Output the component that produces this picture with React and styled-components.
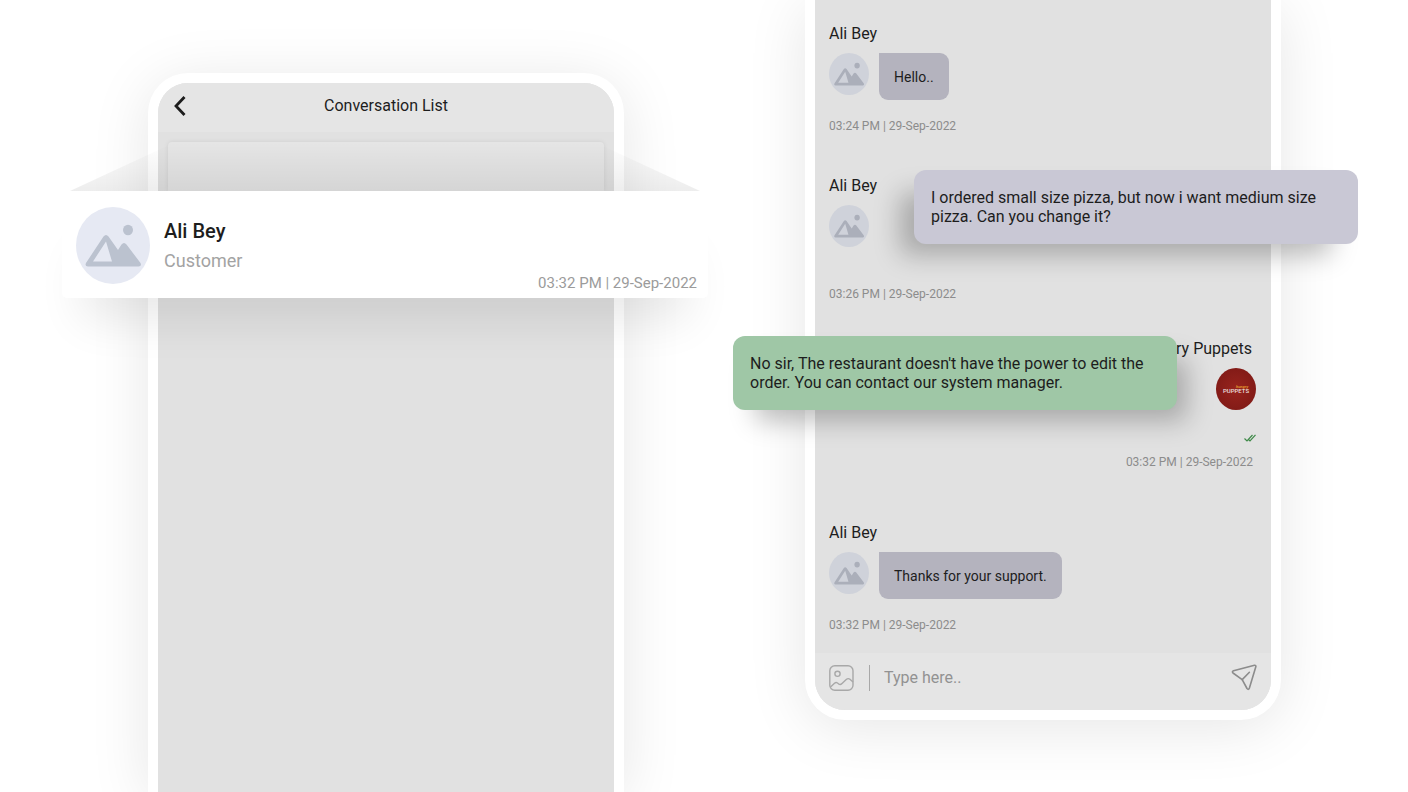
import React from "react";
import styled, { createGlobalStyle } from "styled-components";

const GlobalStyle = createGlobalStyle`
  * {
    box-sizing: border-box;
  }

  body {
    margin: 0;
    background-color: #ffffff;
    color: #1d1d1d;
    font-family: Roboto, "Liberation Sans", sans-serif;
  }

  h1, h2, h3, p {
    margin: 0;
    font-weight: 400;
  }
`;

const Page = styled.main`
  display: grid;
  grid-template-columns: minmax(0, 1fr) minmax(0, 1fr);
  column-gap: 181px;
  height: 100vh;
  padding: 0 127px 0 148px;
  overflow: hidden;
`;

const Phone = styled.section`
  display: flex;
  flex-direction: column;
  border: 10px solid #ffffff;
  background-color: #e1e1e1;
  box-shadow: 0 8px 60px rgba(0, 0, 0, 0.1);
`;

const ListPhone = styled(Phone)`
  margin-top: 73px;
  border-bottom: none;
  border-radius: 40px 40px 0 0;
`;

const ChatPhone = styled(Phone)`
  align-self: start;
  border-top: none;
  border-radius: 0 0 40px 40px;
`;

/* conversation list */
const Header = styled.header`
  display: grid;
  grid-template-columns: 44px 1fr 44px;
  align-items: center;
  height: 49px;
  padding-bottom: 4px;
  border-radius: 30px 30px 0 0;
  background-color: #e5e5e5;
`;

const Title = styled.h1`
  font-size: 16px;
  line-height: 20px;
  text-align: center;
`;

const IconButton = styled.button`
  display: flex;
  align-items: center;
  justify-content: center;
  padding: 0;
  border: none;
  background: none;
  color: ${({ $color }) => $color || "#1d1d1d"};
`;

const Ghost = styled.div`
  height: 49px;
  margin: 10px 10px 0;
  border-radius: 4px 4px 0 0;
  background-color: #e5e5e5;
  box-shadow: 0 0 5px rgba(0, 0, 0, 0.08);
`;

const Spotlight = styled.article`
  position: relative;
  display: flex;
  gap: 14px;
  min-height: 107px;
  margin: 0 -94px 0 -96px;
  padding: 16px 11px 6px 14px;
  border-radius: 5px;
  background-color: #ffffff;
  box-shadow: 0 42px 46px -20px rgba(0, 0, 0, 0.09);

  &::before {
    content: "";
    position: absolute;
    right: 0;
    bottom: 100%;
    left: 0;
    height: 49px;
    background: linear-gradient(rgba(0, 0, 0, 0), rgba(0, 0, 0, 0.07));
    clip-path: polygon(
      105px 4px,
      105px 0,
      calc(100% - 105px) 0,
      calc(100% - 105px) 4px,
      calc(100% - 8px) 100%,
      8px 100%
    );
  }
`;

const SpotlightInfo = styled.div`
  display: flex;
  flex: 1;
  flex-direction: column;
`;

const SpotlightName = styled.h2`
  margin-top: 10px;
  font-size: 20px;
  font-weight: 500;
  line-height: 28px;
`;

const Role = styled.p`
  margin-top: 4px;
  color: #a3a3a3;
  font-size: 18px;
  line-height: 24px;
`;

const SpotlightTime = styled.time`
  align-self: flex-end;
  margin-top: auto;
  color: #9b9b9b;
  font-size: 15px;
  line-height: 18px;
`;

/* chat */
const Thread = styled.div`
  padding: 23px 15px 20px 14px;
`;

const Message = styled.article`
  position: relative;
  display: flex;
  flex-direction: column;
  align-items: ${({ $own }) => ($own ? "flex-end" : "flex-start")};
  margin-bottom: ${({ $space }) => $space || 0}px;
`;

const Sender = styled.h3`
  padding-right: ${({ $own }) => ($own ? 4 : 0)}px;
  font-size: 16px;
  line-height: 22px;
`;

const Row = styled.div`
  display: flex;
  align-items: flex-start;
  gap: 10px;
  min-height: ${({ $minHeight }) => $minHeight || 47}px;
  margin-top: 8px;
`;

const Bubble = styled.p`
  padding: 15px 15px 13px;
  border-radius: 0 9px 9px 9px;
  background-color: #b4b3be;
  font-size: 14px;
  line-height: 19px;
`;

const Time = styled.time`
  margin-top: ${({ $own }) => ($own ? 12 : 18)}px;
  padding-right: ${({ $own }) => ($own ? 3 : 0)}px;
  color: #8c8c8c;
  font-size: 12px;
  line-height: 16px;
`;

const Popout = styled.p`
  position: absolute;
  z-index: 1;
  padding: 18px 17px;
  border-radius: 12px;
  font-size: 16px;
  line-height: 19px;
`;

const CustomerPopout = styled(Popout)`
  top: -5px;
  right: -102px;
  left: 85px;
  background-color: #c9c8d5;
  box-shadow: -20px 17px 26px -6px rgba(0, 0, 0, 0.25);
`;

const RestaurantPopout = styled(Popout)`
  top: -2px;
  right: 79px;
  left: -96px;
  background-color: #9fc7a6;
  box-shadow: 16px 17px 26px -6px rgba(0, 0, 0, 0.25);
`;

const Composer = styled.form`
  display: flex;
  align-items: center;
  height: 57px;
  padding: 0 14px 8px 14px;
  border-radius: 0 0 30px 30px;
  background-color: #e5e5e5;
`;

const Divider = styled.span`
  width: 1px;
  height: 26px;
  margin: 0 14px 0 15px;
  background-color: #a8a8a8;
`;

const TextInput = styled.input`
  flex: 1;
  min-width: 0;
  padding: 0;
  border: none;
  outline: none;
  background: none;
  color: #1d1d1d;
  font-family: inherit;
  font-size: 16px;
  line-height: 20px;

  &::placeholder {
    color: #929292;
    opacity: 1;
  }
`;

const Avatar = ({ width, height, back, shape }) => (
  <svg
    width={width}
    height={height}
    viewBox="0 0 74 77"
    preserveAspectRatio="none"
    role="img"
    aria-label="Ali Bey"
  >
    <ellipse cx="37" cy="38.5" rx="37" ry="38.5" fill={back} />
    <ellipse cx="52" cy="23" rx="5" ry="5.3" fill={shape} />
    <path
      fill={shape}
      fillRule="evenodd"
      d="M27.5 29.5Q30 26.5 32.5 29.5L42 43L45.5 37.5Q48 34.5 50.5 37.5L64.5 56Q66 59.5 62.5 59.5H12Q8.5 59.5 10 56ZM30 34.5L17 54.5H36Z"
    />
  </svg>
);

const SmallAvatar = () => (
  <Avatar width={40} height={42} back="#cfd2da" shape="#abafba" />
);

const RestaurantLogo = () => (
  <svg width="40" height="42" viewBox="0 0 40 42" role="img" aria-label="Hungry Puppets">
    <defs>
      <radialGradient id="logoRed">
        <stop offset="0" stopColor="#98231d" />
        <stop offset="1" stopColor="#831b17" />
      </radialGradient>
    </defs>
    <ellipse cx="20" cy="21" rx="20" ry="21" fill="url(#logoRed)" />
    <text x="20" y="20" fill="#e0952e" fontSize="4" fontStyle="italic" fontWeight="700">
      hungry
    </text>
    <text x="20" y="25" fill="#eadfdc" fontSize="6" fontWeight="500" textAnchor="middle">
      PUPPETS
    </text>
  </svg>
);

const BackIcon = () => (
  <svg width="14" height="20" viewBox="0 0 14 20" fill="none">
    <path d="M11.5 1L3 10L11.500 19" stroke="currentColor" strokeWidth="2.8" />
  </svg>
);

const ChecksIcon = () => (
  <svg width="12" height="8" viewBox="0 0 12 8" fill="none" role="img" aria-label="Seen">
    <path
      d="M0.5 4.5L3 7L8.5 1M4.5 5.5L6 7L11.5 0.8"
      stroke="#3f8a49"
      strokeWidth="1.2"
    />
  </svg>
);

const GalleryIcon = () => (
  <svg width="25" height="26" viewBox="0 0 25 26" fill="none" stroke="currentColor" strokeWidth="1.4">
    <rect x="0.8" y="0.8" width="23.2" height="24.4" rx="5" />
    <circle cx="8.5" cy="8.8" r="2.6" />
    <path d="M1.500 22L5.500 18.2Q7 17 8.5 18L10 19.2Q11.5 20 13 18.5L17.5 14.2Q19.2 13 21 14.3L24 17" />
  </svg>
);

const SendIcon = () => (
  <svg
    width="26"
    height="27"
    viewBox="0 0 26 27"
    fill="none"
    stroke="currentColor"
    strokeWidth="1.6"
    strokeLinejoin="round"
    strokeLinecap="round"
  >
    <path d="M23.5 1.2L2.5 6.8Q0.6 7.6 2 9L11.2 15.6L16 24.5Q17.6 26.4 18.4 24L24.9 2.6Q25 1 23.5 1.2Z" />
    <path d="M11.2 15.6L18.4 8.3" />
  </svg>
);

const ConversationList = () => {
  return (
    <ListPhone>
      <Header>
        <IconButton type="button" aria-label="Back">
          <BackIcon />
        </IconButton>
        <Title>Conversation List</Title>
      </Header>
      <Ghost />
      <Spotlight>
        <Avatar width={74} height={77} back="#e6e9f3" shape="#bbc2cf" />
        <SpotlightInfo>
          <SpotlightName>Ali Bey</SpotlightName>
          <Role>Customer</Role>
          <SpotlightTime>03:32 PM | 29-Sep-2022</SpotlightTime>
        </SpotlightInfo>
      </Spotlight>
    </ListPhone>
  );
};

const Chat = () => {
  return (
    <ChatPhone>
      <Thread>
        <Message $space={41}>
          <Sender>Ali Bey</Sender>
          <Row>
            <SmallAvatar />
            <Bubble>Hello..</Bubble>
          </Row>
          <Time>03:24 PM | 29-Sep-2022</Time>
        </Message>

        <Message $space={36}>
          <Sender>Ali Bey</Sender>
          <Row $minHeight={63}>
            <SmallAvatar />
            <CustomerPopout>
              I ordered small size pizza, but now i want medium size pizza. Can
              you change it?
            </CustomerPopout>
          </Row>
          <Time>03:26 PM | 29-Sep-2022</Time>
        </Message>

        <Message $own $space={52}>
          <Sender $own>Hungry Puppets</Sender>
          <Row $minHeight={66}>
            <RestaurantPopout>
              No sir, The restaurant doesn't have the power to edit the order.
              You can contact our system manager.
            </RestaurantPopout>
            <RestaurantLogo />
          </Row>
          <ChecksIcon />
          <Time $own>03:32 PM | 29-Sep-2022</Time>
        </Message>

        <Message>
          <Sender>Ali Bey</Sender>
          <Row>
            <SmallAvatar />
            <Bubble>Thanks for your support.</Bubble>
          </Row>
          <Time>03:32 PM | 29-Sep-2022</Time>
        </Message>
      </Thread>

      <Composer onSubmit={(e) => e.preventDefault()}>
        <IconButton type="button" aria-label="Add a picture" $color="#a8a8a8">
          <GalleryIcon />
        </IconButton>
        <Divider />
        <TextInput type="text" aria-label="Message" placeholder="Type here.." />
        <IconButton type="submit" aria-label="Send" $color="#8c8c8c">
          <SendIcon />
        </IconButton>
      </Composer>
    </ChatPhone>
  );
};

const App = () => {
  return (
    <>
      <GlobalStyle />
      <Page>
        <ConversationList />
        <Chat />
      </Page>
    </>
  );
};

export default App;
